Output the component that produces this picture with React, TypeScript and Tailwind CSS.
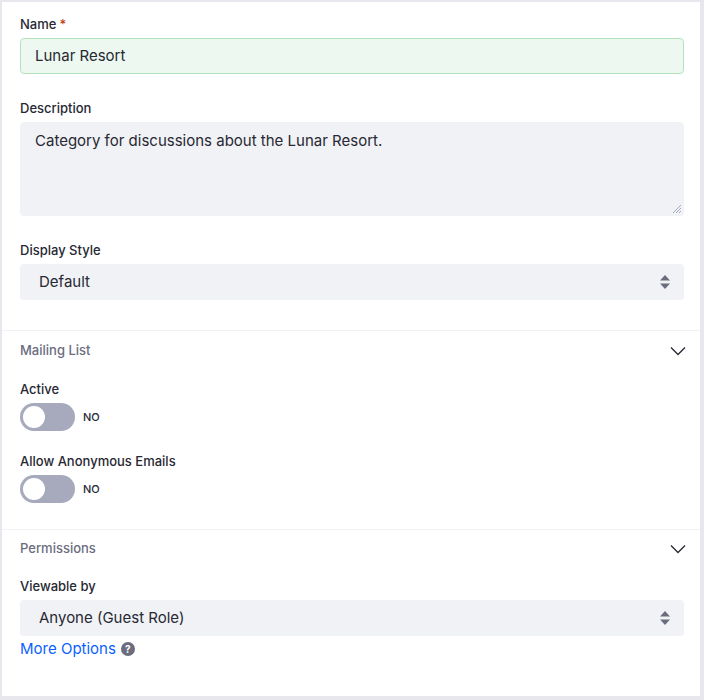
function Label({ children, req }: { children: string; req?: boolean }) {
  return (
    <div className="text-[13px] font-medium text-[#272833] leading-[16px] mb-[6px]">
      {children}
      {req && <span className="text-[#c03d0e] ml-[3px]">*</span>}
    </div>
  )
}

function SelectArrows() {
  return (
    <svg width="10" height="14" viewBox="0 0 10 14" className="text-[#6b6c7e]">
      <path d="M5 0 L10 5.5 H0 Z M5 14 L10 8.5 H0 Z" fill="currentColor" />
    </svg>
  )
}

function Toggle() {
  return (
    <div className="flex items-center gap-[8px]">
      <div className="w-[55px] h-[28px] rounded-full bg-[#a7a9bc] flex items-center pl-[3px]">
        <div className="w-[22px] h-[22px] rounded-full bg-white" />
      </div>
      <span className="text-[11px] font-medium text-[#272833]">NO</span>
    </div>
  )
}

function SectionHeader({ title }: { title: string }) {
  return (
    <div className="flex items-center justify-between h-[32px]">
      <span className="text-[13px] font-medium text-[#6b6c7e]">{title}</span>
      <svg width="16" height="10" viewBox="0 0 16 10" className="-mr-[2px]">
        <path d="M1 1.5 L8 8.5 L15 1.5" fill="none" stroke="#272833" strokeWidth="1.3" />
      </svg>
    </div>
  )
}

export default function App() {
  return (
    <div className="w-[704px] h-[700px] bg-[#e7e7ed] pt-[2px] pl-[2px] pr-[4px] pb-[4px]" style={{ fontFamily: '"Inter", "Liberation Sans", sans-serif' }}>
      <div className="bg-white h-full">
        <div className="pl-[18px] pr-[16px] pt-[14px] pb-[30px] border-b border-[#f1f2f5]">
          <Label req>Name</Label>
          <div className="h-[36px] rounded-[4px] border border-[#b3e3bd] bg-[#edf9f0] px-[14px] flex items-center text-[15px] text-[#272833]">
            Lunar Resort
          </div>
          <div className="mt-[26px]">
            <Label>Description</Label>
            <div className="relative h-[94px] rounded-[4px] bg-[#f1f2f5] px-[15px] pt-[8px] text-[15px] text-[#272833]">
              Category for discussions about the Lunar Resort.
              <svg width="10" height="10" viewBox="0 0 10 10" className="absolute right-[2px] bottom-[2px]">
                <path d="M9 1 L1 9 M9 4 L4 9 M9 7 L7 9" stroke="#a7a9bc" strokeWidth="1" />
              </svg>
            </div>
          </div>
          <div className="mt-[26px]">
            <Label>Display Style</Label>
            <div className="h-[36px] rounded-[4px] bg-[#f1f2f5] pl-[19px] pr-[14px] flex items-center justify-between text-[15px] text-[#272833]">
              Default
              <SelectArrows />
            </div>
          </div>
        </div>
        <div className="pl-[18px] pr-[16px] pt-[4px] pb-[26px] border-b border-[#f1f2f5]">
          <SectionHeader title="Mailing List" />
          <div className="mt-[14px]">
            <Label>Active</Label>
            <Toggle />
          </div>
          <div className="mt-[22px]">
            <Label>Allow Anonymous Emails</Label>
            <Toggle />
          </div>
        </div>
        <div className="pl-[18px] pr-[16px] pt-[3px]">
          <SectionHeader title="Permissions" />
          <div className="mt-[13px]">
            <Label>Viewable by</Label>
            <div className="h-[36px] rounded-[4px] bg-[#f1f2f5] pl-[19px] pr-[14px] flex items-center justify-between text-[15px] text-[#272833]">
              Anyone (Guest Role)
              <SelectArrows />
            </div>
            <div className="mt-[2px] flex items-center gap-[5px]">
              <span className="text-[15px] text-[#0b5fff]">More Options</span>
              <span className="w-[14px] h-[14px] rounded-full bg-[#6b6c7e] text-white text-[10px] font-bold flex items-center justify-center">?</span>
            </div>
          </div>
        </div>
      </div>
    </div>
  )
}
